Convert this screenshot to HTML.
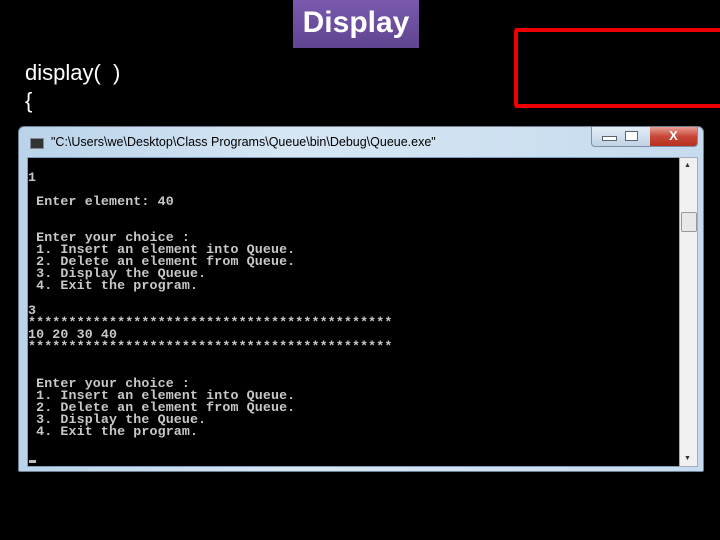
<!DOCTYPE html>
<html><head><style>
*{margin:0;padding:0}
body{width:720px;height:540px;background:#000;position:relative;overflow:hidden;font-family:"Liberation Sans",sans-serif}
.title{position:absolute;left:293px;top:0;width:126px;height:48px;background:linear-gradient(#7a5aae,#5f4490);color:#fff;font-weight:bold;font-size:30px;text-align:center;line-height:46px}
.red{position:absolute;left:514px;top:28px;width:220px;height:80px;border:4px solid #e00;border-radius:3px;box-sizing:border-box}
.code{position:absolute;left:25px;color:#fff;font-size:22px}
.win{position:absolute;left:18px;top:126px;width:686px;height:346px;background:linear-gradient(90deg,#b9d3ea,#d6e6f4 40%,#c6dbee);border:1px solid #6d7f91;border-radius:6px 6px 2px 2px;box-sizing:border-box}
.ttl{position:absolute;left:32px;top:8px;font-size:12.5px;color:#000;white-space:nowrap}
.ico{position:absolute;left:11px;top:11px;width:12px;height:9px;background:#333;border:1px solid #889}
.btns{position:absolute;left:572px;top:0;width:105px;height:19px;border:1px solid #7890a8;border-top:none;border-radius:0 0 4px 4px;background:linear-gradient(#e4edf6,#c0d2e4);overflow:hidden}
.close{position:absolute;right:0;top:0;width:47px;height:19px;background:linear-gradient(#e8a093,#c8463a 50%,#b8301e);color:#fff;font-weight:bold;font-size:13px;text-align:center;line-height:18px}
.con{position:absolute;left:8px;top:30px;width:652px;height:308px;background:#000;border:1px solid #7f9db9}
.sb{position:absolute;left:660px;top:30px;width:17px;height:308px;background:#f0f0f0;border:1px solid #aab}
.thumb{position:absolute;left:1px;top:54px;width:14px;height:18px;border:1px solid #999;border-radius:2px;background:#e8e8e8}
.arr{position:absolute;left:4px;font-size:7px;color:#333}
.t{position:absolute;left:0;color:#c8c8c8;font-family:"Liberation Mono",monospace;font-size:13.3px;font-weight:bold;line-height:12px;white-space:pre;letter-spacing:0.12px}
</style></head><body>
<div class="title">Display</div>
<div class="red"></div>
<div class="code" style="top:60px">display(&nbsp; )</div>
<div class="code" style="top:88px">{</div>
<div class="win">
 <div class="ico"></div>
 <div class="ttl">"C:\Users\we\Desktop\Class Programs\Queue\bin\Debug\Queue.exe"</div>
 <div class="btns"><span style="position:absolute;left:10px;top:9px;width:13px;height:3px;background:#fff;border:1px solid #567"></span><span style="position:absolute;left:33px;top:4px;width:11px;height:8px;border:1px solid #567;background:#fff"></span><div class="close">X</div></div>
 <div class="con">
  <div class="t" style="top:14px">1</div>
  <div class="t" style="top:38px"> Enter element: 40</div>
  <div class="t" style="top:74px"> Enter your choice :
 1. Insert an element into Queue.
 2. Delete an element from Queue.
 3. Display the Queue.
 4. Exit the program.</div>
  <div class="t" style="top:147px">3
*********************************************
10 20 30 40
*********************************************</div>
  <div class="t" style="top:220px"> Enter your choice :
 1. Insert an element into Queue.
 2. Delete an element from Queue.
 3. Display the Queue.
 4. Exit the program.</div>
  <div style="position:absolute;left:1px;top:302px;width:7px;height:3px;background:#bbb"></div>
 </div>
 <div class="sb"><div class="arr" style="top:4px">▲</div><div class="thumb"></div><div class="arr" style="bottom:4px">▼</div></div>
</div>
</body></html>
